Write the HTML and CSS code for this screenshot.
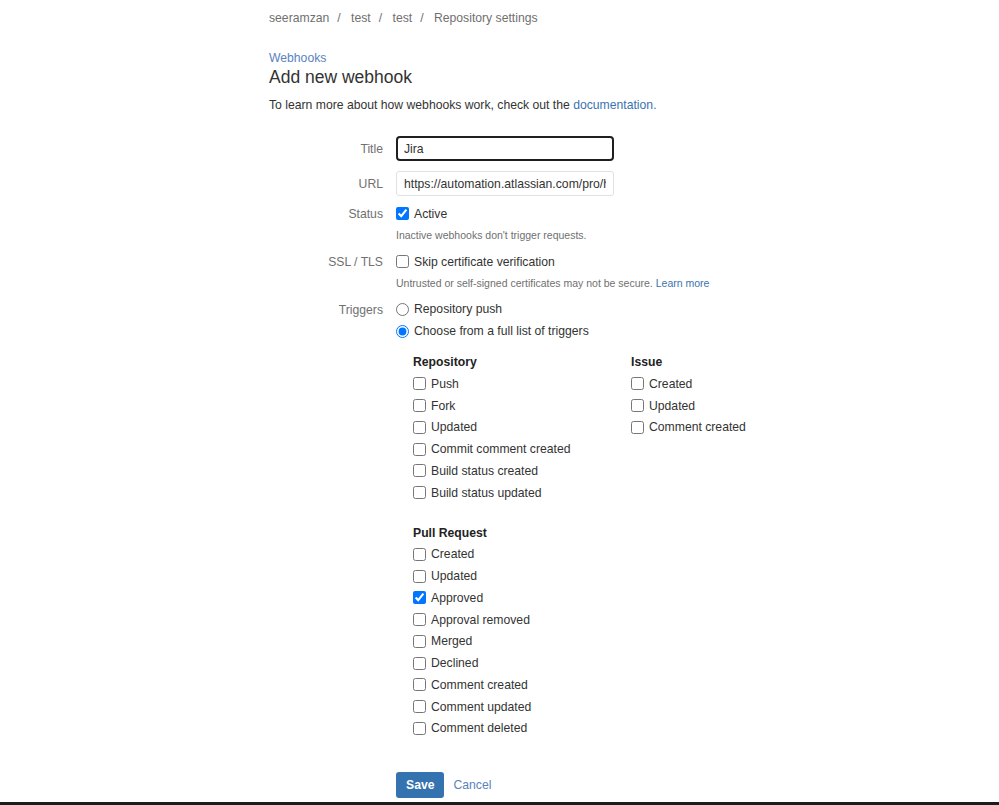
FILE: index.html
```html
<!DOCTYPE html>
<html lang="en">
<head>
  <meta charset="UTF-8" />
  <title>Add new webhook</title>
  <link rel="stylesheet" href="styles.css">
</head>
<body>

<div class="page">
  <div class="breadcrumbs">
    <a href="#">seeramzan</a><span class="sep">/</span>
    <a href="#">test</a><span class="sep">/</span>
    <a href="#">test</a><span class="sep">/</span>
    <a href="#">Repository settings</a>
  </div>

  <a class="back-link" href="#">Webhooks</a>
  <h1 class="page-title">Add new webhook</h1>
  <p class="intro">To learn more about how webhooks work, check out the <a href="#">documentation.</a></p>

  <form class="webhook-form">
    <div class="field-row">
      <label class="field-label" for="title">Title</label>
      <input class="text-input focused" id="title" type="text" value="Jira">
    </div>

    <div class="field-row">
      <label class="field-label" for="url">URL</label>
      <input class="text-input" id="url" type="text" value="https://automation.atlassian.com/pro/hooks/">
    </div>

    <div class="field-row check-row">
      <span class="field-label">Status</span>
      <div>
        <label class="option"><input type="checkbox" checked> Active</label>
        <div class="help">Inactive webhooks don't trigger requests.</div>
      </div>
    </div>

    <div class="field-row check-row">
      <span class="field-label">SSL / TLS</span>
      <div>
        <label class="option"><input type="checkbox"> Skip certificate verification</label>
        <div class="help">Untrusted or self-signed certificates may not be secure. <a href="#">Learn more</a></div>
      </div>
    </div>

    <div class="field-row check-row">
      <span class="field-label">Triggers</span>
      <div>
        <label class="option"><input type="radio" name="mode"> Repository push</label>
        <label class="option"><input type="radio" name="mode" checked> Choose from a full list of triggers</label>

        <div class="trigger-grid">
          <div class="trigger-group">
            <h4>Repository</h4>
            <label class="option"><input type="checkbox"> Push</label>
            <label class="option"><input type="checkbox"> Fork</label>
            <label class="option"><input type="checkbox"> Updated</label>
            <label class="option"><input type="checkbox"> Commit comment created</label>
            <label class="option"><input type="checkbox"> Build status created</label>
            <label class="option"><input type="checkbox"> Build status updated</label>
          </div>
          <div class="trigger-group">
            <h4>Issue</h4>
            <label class="option"><input type="checkbox"> Created</label>
            <label class="option"><input type="checkbox"> Updated</label>
            <label class="option"><input type="checkbox"> Comment created</label>
          </div>
          <div class="trigger-group pull-request">
            <h4>Pull Request</h4>
            <label class="option"><input type="checkbox"> Created</label>
            <label class="option"><input type="checkbox"> Updated</label>
            <label class="option"><input type="checkbox" checked> Approved</label>
            <label class="option"><input type="checkbox"> Approval removed</label>
            <label class="option"><input type="checkbox"> Merged</label>
            <label class="option"><input type="checkbox"> Declined</label>
            <label class="option"><input type="checkbox"> Comment created</label>
            <label class="option"><input type="checkbox"> Comment updated</label>
            <label class="option"><input type="checkbox"> Comment deleted</label>
          </div>
        </div>
      </div>
    </div>

    <div class="actions">
      <button class="btn-save" type="button">Save</button>
      <a class="cancel" href="#">Cancel</a>
    </div>
  </form>
</div>

<div class="bottom-bar"></div>

</body>
</html>
```

FILE: styles.css
```css
body {
  margin: 0;
  font-family: "Liberation Sans", Arial, sans-serif;
  font-size: 12.2px;
  color: #333;
  background: #fff;
}

a {
  color: #3b73af;
  text-decoration: none;
}

.page {
  margin-left: 269px;
  height: 802px;
}

.breadcrumbs {
  padding-top: 9px;
  line-height: 18px;
  color: #707070;
}

.breadcrumbs a {
  color: #707070;
}

.breadcrumbs .sep {
  margin: 0 7px 0 8px;
}

.back-link {
  display: block;
  margin-top: 22px;
  line-height: 18px;
  color: #5a82c0;
}

.page-title {
  margin: 0;
  font-size: 17.5px;
  font-weight: normal;
  line-height: 20px;
  color: #333;
}

.intro {
  margin: 9px 0 0;
  line-height: 18px;
}

.webhook-form {
  margin-top: 22px;
}

.field-row {
  display: grid;
  grid-template-columns: 114px 1fr;
  column-gap: 13px;
  align-items: center;
  margin-bottom: 10px;
}

.field-label {
  text-align: right;
  color: #707070;
}

.check-row {
  align-items: start;
  margin-bottom: 8px;
}

.field-row + .check-row {
  margin-top: -3px;
}

.check-row + .check-row {
  margin-top: 0;
}

.check-row .field-label {
  line-height: 22px;
}

.text-input {
  box-sizing: border-box;
  width: 218px;
  height: 25px;
  padding: 0 7px;
  font-family: inherit;
  font-size: 12.2px;
  color: #333;
  border: 1px solid #dfe1e6;
  border-radius: 3px;
  outline: none;
}

.text-input.focused {
  border: 2px solid #1f1f1f;
  border-radius: 4px;
  padding: 0 6px;
}

.option {
  display: flex;
  align-items: center;
  height: 21.75px;
  white-space: nowrap;
}

.option input {
  width: 13px;
  height: 13px;
  margin: 0 5px 0 0;
}

.help {
  margin-top: 2px;
  font-size: 10.5px;
  line-height: 16px;
  color: #707070;
}

.trigger-grid {
  display: grid;
  grid-template-columns: 218px auto;
  margin-top: 9px;
  padding-left: 17px;
}

.trigger-group h4 {
  margin: 0;
  font-size: 12.2px;
  font-weight: bold;
  line-height: 22px;
  color: #222;
}

.pull-request {
  margin-top: 18px;
}

.actions {
  display: flex;
  align-items: center;
  gap: 9px;
  margin-top: 33px;
  padding-left: 127px;
}

.btn-save {
  height: 26px;
  padding: 0 10px;
  font-family: inherit;
  font-size: 12.2px;
  font-weight: bold;
  color: #fff;
  background: #3572b0;
  border: none;
  border-radius: 3px;
}

.cancel {
  color: #5a82c0;
}

.bottom-bar {
  height: 3px;
  background: #1c1c1c;
}
```
